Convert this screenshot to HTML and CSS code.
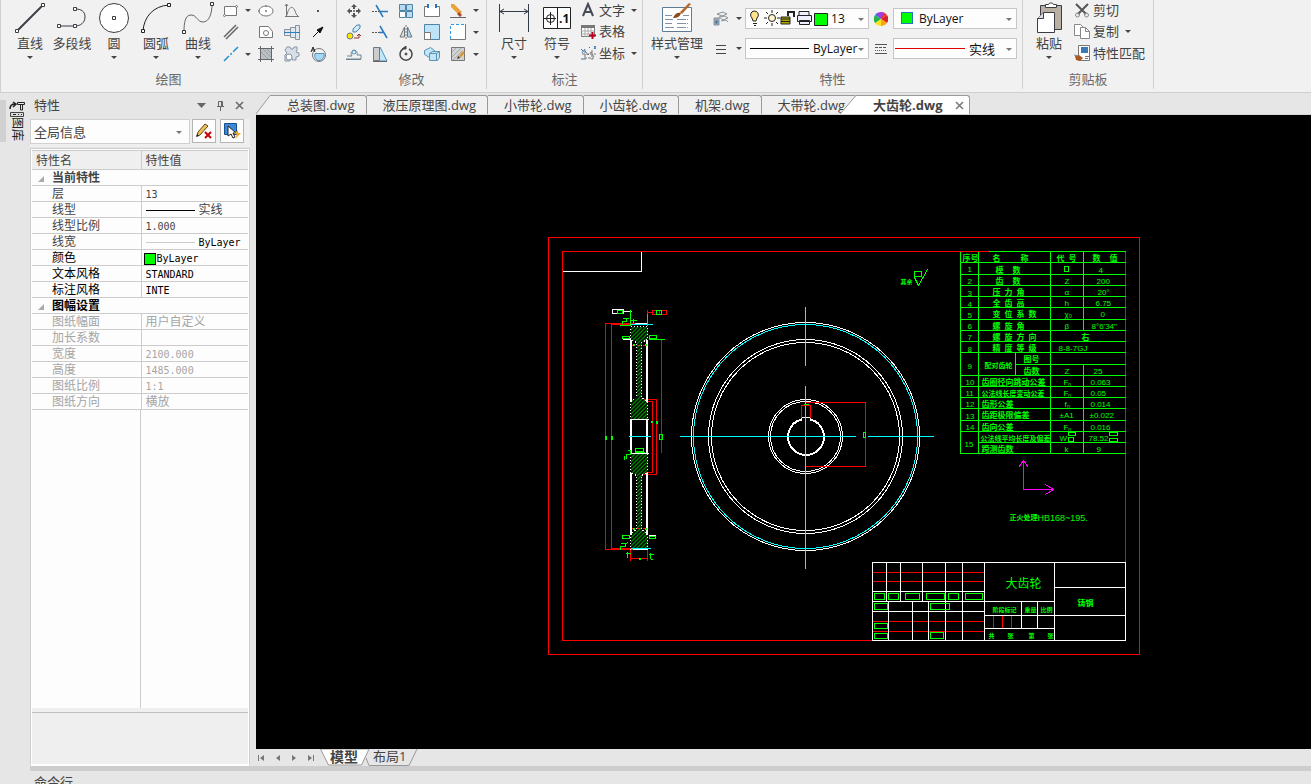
FILE: index.html
```html
<!DOCTYPE html>
<html lang="zh-CN">
	<head>
		<meta charset="UTF-8" />
		<meta name="viewport" content="width=device-width, initial-scale=1.0" />
		<title>大齿轮.dwg</title>
		<link rel="stylesheet" href="styles.css">
	</head>
	<body>
		<header class="ribbon">
			<section class="group draw">
				<div class="tools">
					<button type="button" class="big">
						<svg width="32" height="32" viewBox="0 0 32 32" fill="none" stroke="#3c3c44"><path d="M3 29L29 3" stroke-width="2"/><path d="M1.500 27.500h3v3h-3zM27.500 1.500h3v3h-3z" fill="#fff"/></svg>
						<span>直线</span><i class="caret"></i>
					</button>
					<button type="button" class="big">
						<svg width="32" height="32" viewBox="0 0 32 32" fill="none" stroke="#3c3c44"><path d="M3 24h16c5 0 10-3 10-9s-4-8-10-8" /><path d="M1.500 22.500h3v3h-3zM17.500 22.500h3v3h-3zM17.500 5.500h3v3h-3z" fill="#fff"/></svg>
						<span>多段线</span>
					</button>
					<button type="button" class="big">
						<svg width="32" height="32" viewBox="0 0 32 32" fill="#fff" stroke="#3c3c44"><circle cx="16" cy="16" r="14.500"/><path d="M14.500 14.500h3v3h-3z"/></svg>
						<span>圆</span><i class="caret"></i>
					</button>
					<button type="button" class="big">
						<svg width="32" height="32" viewBox="0 0 32 32" fill="none" stroke="#222"><path d="M3 29C4 15 13 4 29 3"/><path d="M1.500 27.500h3v3h-3zM27.500 1.500h3v3h-3z" fill="#fff"/></svg>
						<span>圆弧</span><i class="caret"></i>
					</button>
					<button type="button" class="big">
						<svg width="32" height="32" viewBox="0 0 32 32" fill="none" stroke="#666"><path d="M2 30C2 21 3 13 9 13s6 7 12 7 9-8 9-18"/><path d="M.5 28.500h3v3h-3zM28.500 .5h3v3h-3z" fill="#fff" stroke="#333"/></svg>
						<span>曲线</span><i class="caret"></i>
					</button>
					<div class="icons draw-icons">
						<button type="button"><svg width="16" height="16" viewBox="0 0 16 16" fill="#fff" stroke="#777"><path d="M1.500 3.500h12v9h-12z"/><circle cx="1.500" cy="12.500" r="1"/><circle cx="13.500" cy="3.500" r="1"/></svg><i class="caret"></i></button>
						<button type="button"><svg width="16" height="16" viewBox="0 0 16 16" fill="#fff" stroke="#777"><ellipse cx="8" cy="8" rx="7" ry="5"/><path d="M8 7v2M7 8h2M7 3h2M1 7v2"/></svg></button>
						<button type="button"><svg width="16" height="16" viewBox="0 0 16 16" fill="none" stroke="#777"><path d="M2.500 1v13M1 13.500h14M3 12C5 2 10 2 12 11M12 11l3 3M1 3l1.500-2L4 3"/></svg></button>
						<button type="button"><svg width="16" height="16" viewBox="0 0 16 16"><path d="M7 7h2v2H7z" fill="#555"/></svg></button>

						<button type="button"><svg width="16" height="16" viewBox="0 0 16 16" fill="none" stroke="#666"><path d="M1 13L13 1M3 15L15 3" stroke-width="1.500"/></svg></button>
						<button type="button"><svg width="16" height="16" viewBox="0 0 16 16" fill="#fff" stroke="#777"><path d="M1.500 2.500h9l4 5v6h-13z"/><circle cx="8" cy="9" r="2.500"/></svg></button>
						<button type="button"><svg width="16" height="16" viewBox="0 0 16 16" fill="#dfe8f0" stroke="#8a939b"><path d="M.5 5.500h6v6h-6zM6.500 3.500h5v10h-5zM11.500 1.500h4v14h-4z"/><path d="M0 8.500h16" stroke="#2a7fc0"/></svg></button>
						<button type="button"><svg width="16" height="16" viewBox="0 0 16 16" stroke="#111" fill="#111"><path d="M3 13l5-5M7 6l6-3-3 6z"/></svg></button>

						<button type="button"><svg width="16" height="16" viewBox="0 0 16 16" stroke="#1d93c9"><path d="M1 15L15 1" stroke-width="1.500" stroke-dasharray="7 2 2 2"/></svg><i class="caret"></i></button>
						<button type="button"><svg width="16" height="16" viewBox="0 0 16 16" stroke="#888"><path d="M2.500 2.500h11v11h-11z" fill="#b8c0c4"/><path d="M0 2.500h16M0 13.500h16M2.500 0v16M13.500 0v16" stroke="#666"/><path d="M3 6l7 7M5 3l8 8M9 3l4 4" stroke="#98a2a8"/></svg></button>
						<button type="button"><svg width="16" height="16" viewBox="0 0 16 16" fill="#d8dfe8" stroke="#8a95a5"><path d="M3 1h3l1 2h2l1-2h3v3l-1 2 3 1v3l-3 1v3h-4v-2H6v3H1v-6l2-2-2-3z"/><circle cx="5" cy="11" r="3" fill="#fff"/></svg></button>
						<button type="button"><svg width="16" height="16" viewBox="0 0 16 16" fill="none" stroke="#777"><circle cx="9" cy="9" r="6.500"/><path d="M5 7.500h9c1 4-2 7-5 7s-5-3-4-7z" fill="#a5d9f5" stroke="#5a8fb0"/><path d="M1 6l2-5 2 5M2 4h3" stroke="#222"/></svg></button>
					</div>
				</div>
				<h2>绘图</h2>
			</section>

			<section class="group modify">
				<div class="tools">
					<div class="icons modify-icons">
						<button type="button"><svg width="16" height="16" viewBox="0 0 16 16" fill="#555"><path d="M8 1l3 3H9v2H7V4H5zM8 15l3-3H9v-2H7v2H5zM1 8l3-3v2h2v2H4v2zM15 8l-3-3v2h-2v2h2v2z"/><circle cx="8" cy="8" r="1"/></svg></button>
						<button type="button"><svg width="16" height="16" viewBox="0 0 16 16" fill="none" stroke="#2a78c0"><path d="M4 2l7 12M8 8.500h8" stroke-width="1.500"/><path d="M0 8.500h7" stroke="#555" stroke-dasharray="2 1"/></svg></button>
						<button type="button"><svg width="16" height="16" viewBox="0 0 16 16" fill="#b7dcf2" stroke="#4f83a5"><path d="M1.500 1.500h6v6h-6zM8.500 1.500h6v6h-6zM8.500 8.500h6v6h-6z"/><path d="M1.500 8.500h6v6h-6z" fill="#fff"/></svg></button>
						<button type="button"><svg width="16" height="16" viewBox="0 0 16 16" fill="#fff" stroke="#777"><path d="M4 3.500H.5v10h15v-10H12"/><path d="M4 1v4M12 1v4" stroke="#2a78c0" stroke-width="2"/></svg></button>
						<button type="button"><svg width="16" height="16" viewBox="0 0 16 16"><path d="M1 1l3 0 8 8-3 3-8-8z" fill="#eba23b"/><path d="M9 9l3 3-2 2-3-3z" fill="#a9482a"/><path d="M0 14.500h16" stroke="#666"/></svg></button>
						<i class="caret"></i>

						<button type="button"><svg width="16" height="16" viewBox="0 0 16 16"><circle cx="4" cy="12" r="3" fill="#f6e600" stroke="#777"/><path d="M7 5l4-4h3v3l-4 4H7z" fill="#cdeafa" stroke="#4f83a5"/><path d="M8 14h5v-4M11 12l2-2 2 2" fill="none" stroke="#9b3030"/></svg></button>
						<button type="button"><svg width="16" height="16" viewBox="0 0 16 16" fill="none" stroke="#2a78c0"><path d="M8 2l7 12M7 8.500h5" stroke-width="1.500"/><path d="M0 8.500h7" stroke="#555" stroke-dasharray="2 1"/></svg></button>
						<button type="button"><svg width="16" height="16" viewBox="0 0 16 16" stroke="#777"><path d="M6.500 3v10H2z" fill="#ddd"/><path d="M9.500 3v10H14z" fill="#a5d9f5"/><path d="M8 1v14" stroke-dasharray="2 1"/></svg></button>
						<button type="button"><svg width="16" height="16" viewBox="0 0 16 16"><path d="M.5 .5h15v15H.5z" fill="#bfe4f8" stroke="#4f83a5"/><path d="M.5 8.500h6v7h-6z" fill="#fff" stroke="#777"/></svg></button>
						<button type="button"><svg width="16" height="16" viewBox="0 0 16 16"><path d="M.5 .5h15v15H.5z" fill="#fff"/><path d="M15.500 0v15.500H0" fill="none" stroke="#777"/><path d="M.5 15V.5H15" fill="none" stroke="#3399dd" stroke-dasharray="3 2"/></svg></button>
						<i class="caret"></i>

						<button type="button"><svg width="16" height="16" viewBox="0 0 16 16" fill="none" stroke="#6e8492"><path d="M1 10h5c-4-6 7-8 5-1h4v4H0" /><path d="M0 13.500h15"/><circle cx="8" cy="6" r="2" stroke="#4e94bf"/></svg></button>
						<button type="button"><svg width="16" height="16" viewBox="0 0 16 16"><path d="M1.500 1.500h6v13h-6z" fill="#ccc" stroke="#777"/><path d="M8 1l7 14H8" fill="#c4e7fa" stroke="#4b91bd" /><path d="M1 15.500h14" stroke="#666"/></svg></button>
						<button type="button"><svg width="16" height="16" viewBox="0 0 16 16" fill="none" stroke="#444"><path d="M5 3a6 6 0 1 0 6 0" stroke-width="1.500"/><path d="M4 3h4V0z" fill="#444"/><circle cx="8" cy="8" r="1" fill="#444"/></svg></button>
						<button type="button"><svg width="16" height="16" viewBox="0 0 16 16" fill="#c1e6f8" stroke="#5a92b2"><path d="M.5 4.500l6-3 4 3v6l-5 1-5-3z"/><path d="M5.500 7.500l3-2h7v6l-2 3h-8zM5.500 7.500h7v7M12.500 7.500l3-2"/></svg></button>
						<button type="button"><svg width="16" height="16" viewBox="0 0 16 16"><path d="M1.500 1.500h13v13h-13z" fill="#d0d3d5" stroke="#777"/><path d="M2 6l4-4M2 11l9-9M3 14l9-9" stroke="#aaa"/><path d="M8 11l5-6 2 2-5 5z" fill="#d69632"/><path d="M7 13l1-3 2 2z" fill="#333"/></svg></button>
						<i class="caret"></i>
					</div>
				</div>
				<h2>修改</h2>
			</section>

			<section class="group annotate">
				<div class="tools">
					<button type="button" class="big">
						<svg width="32" height="32" viewBox="0 0 32 32" fill="none" stroke="#333a48"><path d="M1.500 2v28M30.500 2v28M2 9.500h28M6 7L2 9.500 6 12M26 7l4 2.500-4 2.500"/></svg>
						<span>尺寸</span><i class="caret"></i>
					</button>
					<button type="button" class="big">
						<svg width="32" height="32" viewBox="0 0 32 32" fill="none" stroke="#222"><path d="M2.500 5.500h27v21h-27z" fill="#fff"/><path d="M16.500 5v22M3 16.500h12M9.500 10v13"/><circle cx="9.500" cy="16.500" r="4"/><text x="18" y="21" class="tolerance">.1</text></svg>
						<span>符号</span><i class="caret"></i>
					</button>
					<div class="list">
						<button type="button"><svg width="16" height="16" viewBox="0 0 16 16"><path d="M3 14L8 2l5 12M5 10h6" fill="none" stroke="#454a55" stroke-width="2"/></svg><span>文字</span><i class="caret"></i></button>
						<button type="button"><svg width="16" height="16" viewBox="0 0 16 16"><path d="M1.500 2.500h13v11h-13z" fill="#fff" stroke="#777"/><path d="M1 2h14v3H1z" fill="#777"/><path d="M1 8h13M1 11h13M5 5v9M8 5v9M11 5v9" stroke="#aaa"/><path d="M12.500 9v7M9 12.500h7" stroke="#c00020" stroke-width="2"/></svg><span>表格</span></button>
						<button type="button"><svg width="16" height="16" viewBox="0 0 16 16" fill="none" stroke="#777"><path d="M5 5v10M2 9h14M5 6l3 4 3-3 3 5M12 5v10M4 13h10" stroke-dasharray="3 1"/><path d="M1 4l2 2M5 4l-3 4M9 2l1 1M14 1l2 3M16 1l-2 3M1 14h3" stroke="#2a78c0"/></svg><span>坐标</span><i class="caret"></i></button>
					</div>
				</div>
				<h2>标注</h2>
			</section>

			<section class="group props">
				<div class="tools">
					<button type="button" class="big wide">
						<svg width="32" height="32" viewBox="0 0 32 32"><path d="M1.500 5.500h29v24h-29z" fill="#fff" stroke="#5d7b93"/><path d="M4 13.500h7M4 17.500h8M4 21.500h7M4 25.500h9M16 17.500h11M16 21.500h11M16 25.500h11M22 13.500h6" stroke="#8392a8" stroke-dasharray="9 1"/><path d="M12 16c2-5 5-6 8-5-1 4-4 5-8 5z" fill="#8b4a1c"/><path d="M19 10L28 1l2 1-9 10z" fill="#b8672b"/></svg>
						<span>样式管理</span><i class="caret"></i>
					</button>
					<div class="picks">
						<button type="button" class="mini"><svg width="16" height="16" viewBox="0 0 16 16" fill="#eee" stroke="#8a939b"><path d="M4 3l6-2 4 2-5 2zM6 6l6-1 3 2-5 2zM8 10l5-1 2 2"/><path d="M1 7h5v7H1z" fill="#9ab"/><circle cx="3.500" cy="11" r="1.500" fill="#2b6da8"/></svg><i class="caret"></i></button>
						<label class="combo layer">
							<svg class="over" width="84" height="18" viewBox="0 0 84 18" fill="none" stroke="#222"><path d="M8 2a4 4 0 0 1 3 7l-1 3H7l-1-3a4 4 0 0 1 2-7z" fill="#ffe48a"/><path d="M7 14.500h4M8 16.500h2"/><circle cx="26" cy="9" r="3.500" fill="#fff6cf"/><path d="M26 1v3M26 14v3M18 9h3M31 9h3M20 3l2 2M30 13l2 2M32 3l-2 2M22 13l-2 2"/><path d="M42 7V3h6v5" stroke-width="2"/><path d="M35 8h9v7h-9z" fill="#b0a800"/><path d="M35 10h9M35 12.500h9"/><path d="M53 6V2.500h10V6M51.500 6.500h14v6h-14zM53.500 11.500h10v4h-10z" fill="#eef"/><path d="M68.500 4.500h13v12h-13z" fill="#0f0"/></svg>
							<select aria-label="图层"><option>13</option></select><i class="caret"></i>
						</label>
						<svg class="mark" width="14" height="14" viewBox="0 0 14 14"><path d="M7 7V0a7 7 0 0 1 6 3z" fill="#e33"/><path d="M7 7l6-4a7 7 0 0 1 0 8z" fill="#d22"/><path d="M7 7l6 4a7 7 0 0 1-6 3z" fill="#f9a51a"/><path d="M7 7v7a7 7 0 0 1-6-3z" fill="#ffe11a"/><path d="M7 7l-6 4a7 7 0 0 1 0-8z" fill="#25b44b"/><path d="M7 7L1 3l2-2z" fill="#2a7fe0"/><path d="M7 7L2 2a7 7 0 0 1 8-1z" fill="#a03fe0"/></svg>
						<label class="combo color">
							<b class="swatch over"></b>
							<select aria-label="颜色"><option>ByLayer</option></select><i class="caret"></i>
						</label>
						<button type="button" class="mini"><svg width="16" height="16" viewBox="0 0 16 16" stroke="#444"><path d="M3 4.500h10M3 8.500h10M3 12.500h10"/></svg><i class="caret"></i></button>
						<label class="combo width">
							<b class="line over"></b>
							<select aria-label="线宽"><option>ByLayer</option></select><i class="caret"></i>
						</label>
						<svg class="mark" width="14" height="14" viewBox="0 0 14 14" stroke="#555"><path d="M1 2.500h12M1 11.500h12"/><path d="M1 5.500h12" stroke-dasharray="3 1"/><path d="M1 8.500h12" stroke-dasharray="1 1"/></svg>
						<label class="combo linetype">
							<b class="line over"></b>
							<select aria-label="线型"><option>实线</option></select><i class="caret"></i>
						</label>
					</div>
				</div>
				<h2>特性</h2>
			</section>

			<section class="group clipboard">
				<div class="tools">
					<button type="button" class="big">
						<svg width="32" height="32" viewBox="0 0 32 32" stroke="#3c3c44"><path d="M7.500 3.500h21v24h-21z" fill="#b9b0a3"/><path d="M12.500 5.500v-3h3c0-2 5-2 5 0h3v3z" fill="#fff"/><path d="M4.500 16.500l6-6h11v20h-17z" fill="#fff"/><path d="M4.500 16.500h6v-6" fill="#ddd"/></svg>
						<span>粘贴</span><i class="caret"></i>
					</button>
					<div class="list">
						<button type="button"><svg width="16" height="16" viewBox="0 0 16 16" fill="none" stroke="#555"><path d="M2 2l10 10M14 2L4 12" stroke-width="2"/><circle cx="3.500" cy="13" r="2" stroke="#888"/><circle cx="12.500" cy="13" r="2" stroke="#888"/></svg><span>剪切</span></button>
						<button type="button"><svg width="16" height="16" viewBox="0 0 16 16" fill="#fff" stroke="#888"><path d="M.5 1.500h6l3 3v8h-9z"/><path d="M6.500 4.500h5l4 4v7h-9z"/><path d="M11.500 4.500v4h4" fill="none"/></svg><span>复制</span><i class="caret"></i></button>
						<button type="button"><svg width="16" height="16" viewBox="0 0 16 16"><path d="M4.500 .5h11v15h-11z" fill="#fff" stroke="#777"/><path d="M7 2h7v6H7z" fill="#3d7ab5"/><path d="M11 11.500h4M11 13.500h3" stroke="#777"/><path d="M1 11l4-1 4 3-3 3-4-1z" fill="#a9591c"/><path d="M0 10l5 1" stroke="#888"/></svg><span>特性匹配</span></button>
					</div>
				</div>
				<h2>剪贴板</h2>
			</section>
		</header>

		<main class="workspace">
			<nav class="rail">
				<button type="button">
					<svg width="16" height="16" viewBox="0 0 16 16" fill="none" stroke="#222"><path d="M1 8c0-4 2-5 5-5M4 1l3 2-3 3" stroke-width="1.500"/><path d="M8.500 1.500h7v2h-7zM11.500 4v5h2V4" /><path d="M1.500 11.500h13v4h-13z" fill="#ddd" stroke="#444"/><path d="M4 13.500h3M9 13.500h1M12 13.500h1"/></svg>
					<span>图库</span>
				</button>
			</nav>

			<aside class="panel">
				<div class="panel-head">
					<h3>特性</h3>
					<button type="button" aria-label="菜单"><svg width="11" height="11" viewBox="0 0 11 11"><path d="M1 3h9L5.500 8z" fill="#666"/></svg></button>
					<button type="button" aria-label="固定"><svg width="11" height="11" viewBox="0 0 11 11" fill="none" stroke="#666"><path d="M3.500 6V1.500h4V6M2 6.500h7M5.500 7v4M6.500 2v4"/></svg></button>
					<button type="button" aria-label="关闭"><svg width="11" height="11" viewBox="0 0 11 11" stroke="#666" stroke-width="1.500"><path d="M2 2l7 7M9 2L2 9"/></svg></button>
				</div>
				<div class="panel-bar">
					<label class="combo scope">
						<select aria-label="范围"><option>全局信息</option></select><i class="caret"></i>
					</label>
					<button type="button" aria-label="清除选择"><svg width="18" height="18" viewBox="0 0 18 18"><path d="M3 10l7-8 3 2-8 9-3 1z" fill="#f0c050" stroke="#5b4420"/><path d="M1 15l1-3 2 2z" fill="#222"/><path d="M10 10l6 6M16 10l-6 6" stroke="#c00" stroke-width="2"/></svg></button>
					<button type="button" aria-label="快速选择"><svg width="18" height="18" viewBox="0 0 18 18"><path d="M1.500 1.500h12v11h-12z" fill="#3b8ad8" stroke="#17508c"/><path d="M5 4v10l3-2 2 4 2-1-2-4h3z" fill="#fff" stroke="#222"/><path d="M15 8l-4 4h3l-2 5 6-6h-3z" fill="#f7a51e"/></svg></button>
				</div>
				<div class="sheet">
					<table>
						<tr><th>特性名</th><th>特性值</th></tr>
						<tr class="cat"><td colspan="2">当前特性</td></tr>
						<tr><td>层</td><td><code>13</code></td></tr>
						<tr><td>线型</td><td><b class="sample"></b>实线</td></tr>
						<tr><td>线型比例</td><td><code>1.000</code></td></tr>
						<tr><td>线宽</td><td class="dark"><b class="sample thin"></b><code>ByLayer</code></td></tr>
						<tr class="dark"><td>颜色</td><td><b class="chip"></b><code>ByLayer</code></td></tr>
						<tr class="dark"><td>文本风格</td><td><code>STANDARD</code></td></tr>
						<tr class="dark"><td>标注风格</td><td><code>INTE</code></td></tr>
						<tr class="cat dark"><td colspan="2">图幅设置</td></tr>
						<tr class="off"><td>图纸幅面</td><td>用户自定义</td></tr>
						<tr class="off"><td>加长系数</td><td></td></tr>
						<tr class="off"><td>宽度</td><td><code>2100.000</code></td></tr>
						<tr class="off"><td>高度</td><td><code>1485.000</code></td></tr>
						<tr class="off"><td>图纸比例</td><td><code>1:1</code></td></tr>
						<tr class="off"><td>图纸方向</td><td>横放</td></tr>
					</table>
					<div class="blank"></div>
					<div class="hint"></div>
				</div>
			</aside>

			<section class="editor">
				<nav class="files">
					<svg class="lead" width="15" height="19" viewBox="0 0 15 19"><path d="M0 19L14 .5H15V19z" fill="#f0f0f0"/><path d="M0 19L14 .5H15" fill="none" stroke="#999"/></svg>
					<a href="#" class="first">总装图.dwg</a>
					<a href="#">液压原理图.dwg</a>
					<a href="#">小带轮.dwg</a>
					<a href="#">小齿轮.dwg</a>
					<a href="#">机架.dwg</a>
					<a href="#">大带轮.dwg</a>
					<a href="#" class="active"><svg class="slant" width="17" height="19" viewBox="0 0 17 19"><path d="M0 19L16 .5H17V19z" fill="#fff"/><path d="M0 19L16 .5H17" fill="none" stroke="#999"/></svg>大齿轮.dwg<svg width="9" height="9" viewBox="0 0 9 9" stroke="#777" stroke-width="1.500"><path d="M1 1l7 7M8 1L1 8"/></svg></a>
				</nav>

				<div class="canvas">
					<!-- half pixel origin keeps the 1px strokes sharp -->
					<svg class="drawing" viewBox="255.500 114.500 1055 634" fill="none" shape-rendering="crispEdges">
						<defs>
							<pattern id="hatch" width="4" height="4" patternUnits="userSpaceOnUse">
								<path d="M-1 5L5 -1M-1 1L1 -1M3 5L5 3" stroke="#0f0" stroke-width="1.200"/>
							</pattern>
						</defs>

						<!-- sheet frame -->
						<path d="M548 237H1139V654H548zM562 251H1125V640H562z" stroke="#f00"/>
						<path d="M562 271H641V251" stroke="#fff"/>

						<!-- side view -->
						<g stroke="#f00">
							<path d="M634 323H605V549H634M634 324H611V548H634"/>
							<path d="M643 399H656V474H643M645 401H652V472H645M661 339V452"/>
							<path d="M630 345H647M630 528H647" stroke-dasharray="3 3"/>
							<path d="M630 549V560M647 549V560M630 558H647M647 309V313M647 312H653M652 310H666V314H652zM659 310V314M617 309V313"/>
						</g>
						<path d="M630 326H647V339L641 342V397L647 401V419H630V401L636 397V342L630 339z" fill="url(#hatch)"/>
						<path d="M630 453H647V472L641 475V529L647 533V549H630V533L636 529V475L630 472z" fill="url(#hatch)"/>
						<g stroke="#fff">
							<path d="M630.500 339V401M630.500 419V453M630.500 472V534M646.500 339V401M646.500 419V453M646.500 472V534" stroke-width="2"/>
							<path d="M630 419H648M630 453H648M634 323H647M632 549H647"/>
							<path d="M612 309H623V313H612zM623 311H631M622 339H630M648 338H656M648 535H655"/>
							<path d="M630 326H647V339L641 342V397L647 401V419M630 419V401L636 397V342L630 339V326M630 453V472L636 475V529L630 533V549M647 453V472L641 475V529L647 533V549" stroke-dasharray="1 2"/>
						</g>
						<path d="M628 436H650M629 324H652M630 548H650" stroke="#0ff"/>
						<g stroke="#0f0">
							<path d="M619 325H630V309M647 313V325M648 339H664"/>
							<path d="M617 310H622V313H617zM656 310H661V314H656zM622 336H629V338H622zM649 335H656V338H649zM622 535H629V538H622zM649 536H655V538H649zM659 434H662V439H659zM635 448H643V451H635zM634 452H644M625 454H630V450H627M624 455V459M626 454V458"/>
							<path d="M622 318H626V321H622V323M626 319L629 317M630 320H636M633 318V322M620 543H625V546H620V549M625 544L627 542M625 553H630M627 551V557M648 554H653M650 552V558L653 560"/>
						</g>
						<path d="M604 435h2v4h-2zM610 435h2v4h-2zM655 420h2v3h-2zM650 420h2v2h-2zM632 343h2v2h-2zM644 343h2v2h-2zM632 527h2v2h-2zM644 527h2v2h-2zM638 557h2v2h-2z" fill="#0f0"/>

						<!-- front view -->
						<g stroke="#fff">
							<circle cx="805" cy="436" r="114"/>
							<circle cx="805" cy="436" r="97"/>
							<circle cx="805" cy="436" r="94"/>
							<circle cx="805" cy="436" r="37"/>
							<circle cx="805" cy="436" r="35"/>
							<path d="M801 420V417H810V420" />
							<path d="M801 419A18 18 0 1 0 810 419" stroke-width="2"/>
						</g>
						<circle cx="805" cy="436" r="112" stroke="#0ff"/>
						<path d="M679 436H855M867 436H933M805 306V365M805 385V568" stroke="#0ff"/>
						<path d="M805 402H865V466H805M801 417V404M810 417V404M801 405H810" stroke="#f00"/>
						<path d="M803 404H808M863 432H865V437H863z" stroke="#0f0" stroke-width="1"/>

						<!-- surface finish -->
						<path d="M914 271H921V276H914zM914 277L918 285L927 269" stroke="#0f0"/>
						<text x="900" y="283" class="t6">其余</text>

						<!-- gear data -->
						<g stroke="#0f0">
							<path d="M988 251H1125M960 262H1125M960 274H1125M960 285H1125M960 296H1125M960 307H1125M960 319H1125M960 330H1125M960 341H1125M960 352H1125M1015 364H1125M960 375H1125M960 386H1125M960 397H1125M960 408H1125M960 420H1125M960 431H1125M978 442H1125M960 453H1125"/>
							<path d="M960 251V453M978 251V453M1050 251V453M1083 251V330M1083 364V453M1015 352V375"/>
							<path d="M1064 266H1068V271H1064zM1068 432H1075V435H1068zM1068 437H1073V441H1068zM1109 432H1117V435H1109zM1109 438H1117V441H1109z"/>
						</g>
						<g class="t8">
							<text x="962 970" y="260">序号</text><text x="992 1020" y="260">名称</text><text x="1056 1068" y="260">代号</text><text x="1092 1109" y="260">数值</text>
							<text x="995 1012" y="272">模数</text>
							<text x="995 1012" y="283">齿数</text>
							<text x="992 1004 1016" y="294">压力角</text>
							<text x="992 1004 1016" y="305">全齿高</text>
							<text x="992 1004 1016 1028" y="316">变位系数</text>
							<text x="992 1004 1016" y="328">螺旋角</text>
							<text x="992 1004 1016 1028" y="339">螺旋方向</text><text x="1081" y="339">右</text>
							<text x="992 1004 1016 1028" y="350">精度等级</text>
							<text x="1023" y="361">图号</text><text x="1023" y="373">齿数</text>
							<text x="981" y="384">齿圈径向跳动公差</text>
							<text x="981" y="406">齿形公差</text>
							<text x="981" y="417">齿距极限偏差</text>
							<text x="981" y="429">齿向公差</text>
							<text x="981" y="451">跨测齿数</text>
						</g>
						<g class="t7">
							<text x="984" y="367">配对齿轮</text>
							<text x="981" y="395">公法线长度变动公差</text>
							<text x="980" y="440">公法线平均长度及偏差</text>
							<text x="1009" y="519">正火处理</text>
						</g>
						<g class="num">
							<text x="967" y="271">1</text><text x="967" y="283">2</text><text x="967" y="295">3</text><text x="967" y="306">4</text><text x="967" y="317">5</text><text x="967" y="328">6</text><text x="967" y="339">7</text><text x="967" y="351">8</text><text x="967" y="368">9</text><text x="965" y="384">10</text><text x="965" y="395">11</text><text x="965" y="406">12</text><text x="965" y="418">13</text><text x="965" y="429">14</text><text x="964" y="446">15</text>
							<text x="1098" y="272">4</text>
							<text x="1064" y="283">Z</text><text x="1096" y="283">200</text>
							<text x="1064" y="294">α</text><text x="1097" y="294">20°</text>
							<text x="1064" y="305">h</text><text x="1095" y="305">6.75</text>
							<text x="1064" y="316">χ₀</text><text x="1100" y="316">0</text>
							<text x="1064" y="328">β</text><text x="1091" y="328">8°6'34"</text>
							<text x="1058" y="350">8-8-7GJ</text>
							<text x="1064" y="373">Z</text><text x="1093" y="373">25</text>
							<text x="1063" y="384">Fₙ</text><text x="1090" y="384">0.063</text>
							<text x="1063" y="395">Fₙ</text><text x="1090" y="395">0.05</text>
							<text x="1064" y="406">fₙ</text><text x="1090" y="406">0.014</text>
							<text x="1059" y="417">±A1</text><text x="1089" y="417">±0.022</text>
							<text x="1063" y="429">Fₙ</text><text x="1090" y="429">0.016</text>
							<text x="1059" y="440">W</text><text x="1088" y="440">78.52</text>
							<text x="1064" y="451">k</text><text x="1096" y="451">9</text>
						</g>
						<text x="1037" y="520" class="note">HB168~195.</text>

						<!-- ucs -->
						<path d="M1023 460V489H1053M1018 467L1023 460L1028 467M1045 484L1053 489L1045 494" stroke="#f0f"/>

						<!-- title block -->
						<path d="M872 572H984M872 581H984M872 621H984M872 631H984M993 615V628M1002 615V628M1011 615V628" stroke="#f00"/>
						<path d="M872 562H1125V640H872zM872 591H984M872 601H1054M872 611H984M886 562V601M900 562V601M922 562V601M945 562V640M962 562V640M984 562V640M888 601V640M912 601V640M928 601V640M1054 562V640M1054 587H1125M984 615H1125M984 628H1054M1021 601V628M1037 601V628" stroke="#fff"/>
						<path d="M874 593h10v6h-10zM888 593h10v6h-10zM905 593h14v6h-14zM926 593h18v6h-18zM948 593h10v6h-10zM965 593h17v6h-17zM874 603h13v6h-13zM930 603h19v6h-19zM874 623h13v5h-13zM874 633h13v5h-13zM930 632h13v6h-13z" stroke="#0f0"/>
						<text x="1005" y="587" class="part">大齿轮</text>
						<text x="1077" y="605" class="t8">铸钢</text>
						<g class="t6">
							<text x="992" y="611">阶段标记</text><text x="1024" y="611">重量</text><text x="1040" y="611">比例</text>
							<text x="988 1007 1028 1047" y="637">共张第张</text>
						</g>
					</svg>
				</div>

				<nav class="sheets">
					<button type="button" aria-label="第一个"><svg width="8" height="8" viewBox="0 0 8 8" fill="#777"><path d="M0 1h1v6H0zM6 1v6L2 4z"/></svg></button>
					<button type="button" aria-label="上一个"><svg width="8" height="8" viewBox="0 0 8 8" fill="#777"><path d="M6 1v6L2 4z"/></svg></button>
					<button type="button" aria-label="下一个"><svg width="8" height="8" viewBox="0 0 8 8" fill="#777"><path d="M2 1v6l4-3z"/></svg></button>
					<button type="button" aria-label="最后一个"><svg width="8" height="8" viewBox="0 0 8 8" fill="#777"><path d="M2 1v6l4-3zM7 1h1v6H7z"/></svg></button>
					<a href="#" class="active"><svg width="50" height="17" viewBox="0 0 50 17"><path d="M.5 0l8 16h33L49 0z" fill="#fff" stroke="#999"/></svg><span>模型</span></a>
					<a href="#" class="layout"><svg width="54" height="17" viewBox="0 0 54 17"><path d="M1 9l3 7.500h40L52 0" fill="none" stroke="#999"/></svg><span>布局1</span></a>
				</nav>
			</section>
		</main>

		<footer class="command">命令行</footer>
	</body>
</html>
```
FILE: styles.css
```css
* {
	box-sizing: border-box;
}
body {
	margin: 0;
	height: 100vh;
	display: flex;
	flex-direction: column;
	overflow: hidden;
	background: #e6e6e6;
	color: #444;
	font: 13px/18px "Open Sans", "Noto Sans CJK SC", sans-serif;
}
button,
select {
	font: inherit;
	color: inherit;
	margin: 0;
	padding: 0;
	border: 0;
	background: none;
}
button {
	display: flex;
	align-items: center;
	justify-content: center;
}
button:hover {
	background: #dcebf7;
}
svg {
	display: block;
	flex: none;
}
a {
	color: inherit;
	text-decoration: none;
}
.caret {
	width: 0;
	border: 3px solid transparent;
	border-top-color: #444;
	border-bottom: 0;
}

/* ribbon */
.ribbon {
	flex: none;
	display: flex;
	height: 93px;
	padding-bottom: 3px;
	background: #f1f1f1;
	border-left: 1px solid #d0d0d0;
	border-bottom: 1px solid #cfcfcf;
}
.group {
	display: flex;
	flex-direction: column;
	border-right: 1px solid #d0d0d0;
}
.group h2 {
	margin: 0;
	padding-top: 4px;
	font-size: 13px;
	font-weight: normal;
	color: #6a6a6a;
	text-align: center;
}
.tools {
	display: flex;
	height: 66px;
}
.draw .tools {
	padding: 0 5px 0 8px;
}
.modify .tools {
	padding: 0 5px 0 4px;
}
.annotate .tools {
	gap: 1px;
	padding: 0 5px 0 6px;
}
.props .tools {
	padding: 0 5px;
}
.clipboard .tools {
	padding: 0 8px 0 5px;
}
.big {
	flex-direction: column;
	justify-content: flex-start;
	width: 42px;
	padding-top: 2px;
	white-space: nowrap;
}
.big .caret {
	margin-top: 4px;
}
.wide {
	width: 58px;
}
.tolerance {
	font: bold 12px "Open Sans", sans-serif;
	fill: #111;
	stroke: none;
}
.icons {
	display: grid;
	grid-template-rows: 21px 22px 22px;
	align-items: center;
}
.draw-icons {
	grid-template-columns: 34px 26px 26px 26px;
}
.draw-icons button:nth-child(4n + 1) {
	justify-content: flex-start;
	gap: 6px;
	padding-left: 4px;
}
.modify-icons {
	grid-template-columns: repeat(5, 26px) 10px;
	justify-items: center;
}
.list {
	display: grid;
	grid-template-rows: 20px 22px 22px;
	padding-left: 4px;
}
.annotate .list {
	padding-left: 1px;
}
.list button {
	justify-content: flex-start;
	gap: 3px;
}
.list .caret {
	margin-left: 3px;
}

/* property pickers */
.picks {
	display: grid;
	grid-template-columns: 34px 124px 24px 124px;
	grid-template-rows: 21px 21px;
	row-gap: 9px;
	align-items: center;
	padding: 8px 0 0 5px;
}
.mini {
	gap: 7px;
	justify-content: flex-start;
	height: 21px;
	padding-left: 2px;
}
.mark {
	margin: auto;
}
.combo {
	position: relative;
	display: block;
	height: 21px;
	color: #111;
}
.combo select {
	appearance: none;
	width: 100%;
	height: 100%;
	border: 1px solid #c6c6c6;
	background: #fdfdfd;
	font-size: 12px;
}
.combo .caret {
	position: absolute;
	right: 5px;
	top: 50%;
	margin-top: -1px;
	border-top-color: #777;
}
.over {
	position: absolute;
	left: 1px;
	top: 1px;
	pointer-events: none;
}
.layer select {
	padding-left: 85px;
}
.color select {
	padding-left: 25px;
}
.width select {
	padding-left: 67px;
}
.linetype select {
	padding-left: 75px;
	font-size: 13px;
}
.swatch {
	left: 8px;
	top: 4px;
	width: 12px;
	height: 12px;
	background: #0f0;
	border: 1px solid #2573c2;
}
.line {
	top: 10px;
	left: 5px;
	width: 59px;
	border-top: 1px solid #000;
}
.linetype .line {
	left: 2px;
	width: 70px;
	border-color: #e00000;
}

/* workspace */
.workspace {
	flex: 1;
	min-height: 0;
	display: flex;
}
.rail {
	width: 30px;
	padding-top: 7px;
}
.rail button {
	flex-direction: column;
	width: 25px;
	height: 42px;
	padding-left: 3px;
	border-left: 6px solid #d0d0d0;
}
.rail span {
	writing-mode: vertical-rl;
	text-orientation: sideways;
	font-size: 12px;
	line-height: 14px;
	color: #222;
}
.panel {
	width: 220px;
	display: flex;
	flex-direction: column;
}
.panel-head {
	display: flex;
	align-items: center;
	height: 26px;
	padding: 0 5px 2px 4px;
	gap: 8px;
}
.panel-head h3 {
	flex: 1;
	margin: 0;
	font-size: 13px;
	font-weight: normal;
}
.panel-bar {
	display: flex;
	gap: 4px;
	padding: 0 6px 3px 0;
	background: #efefef;
}
.panel-bar button {
	width: 24px;
	height: 24px;
	border: 1px solid #b5b5b5;
	background: #fdfdfd;
}
.scope {
	flex: 1;
	height: 25px;
	margin-right: -2px;
	color: #444;
}
.scope select {
	padding-left: 3px;
	font-size: 13px;
	border: 1px solid #d0d0d0;
}
.scope .caret {
	right: 8px;
}
.sheet {
	flex: 1;
	display: flex;
	flex-direction: column;
	margin-top: 1px;
	padding: 1px;
	border: 1px solid #d0d0d0;
	background: #fdfdfd;
	border-bottom: 1px solid #fff;
}
table {
	width: 100%;
	table-layout: fixed;
	border-collapse: collapse;
	font-size: 12px;
	line-height: 15px;
}
th,
td {
	height: 16px;
	padding: 0 0 0 4px;
	border-bottom: 1px solid #ccc;
	text-align: left;
	white-space: nowrap;
}
th {
	height: 19px;
	font-weight: normal;
	background: #efefef;
	border-top: 1px solid #ccc;
}
th:first-child {
	width: 109px;
	border-right: 1px solid #ccc;
}
td:first-child {
	padding-left: 20px;
	border-right: 1px solid #ccc;
}
.cat td:first-child {
	position: relative;
	font-weight: bold;
	border-right: 0;
}
.cat td::before {
	content: "";
	position: absolute;
	left: 6px;
	top: 6px;
	border: 3px solid #aaa;
	border-top-color: transparent;
	border-left-color: transparent;
}
.dark {
	color: #000;
}
.off {
	color: #a5a5a5;
}
code {
	display: inline-block;
	vertical-align: middle;
	font: 10px/12px "DejaVu Sans Mono", monospace;
}
.sample,
.chip {
	display: inline-block;
	vertical-align: middle;
}
.sample {
	width: 49px;
	margin-right: 4px;
	border-top: 1px solid #000;
}
.thin {
	border-color: #ccc;
}
.chip {
	width: 12px;
	height: 12px;
	margin: 0 1px 0 -2px;
	background: #0f0;
	border: 1px solid #000;
}
.blank {
	flex: 1;
	width: 109px;
	border-right: 1px solid #ccc;
}
.hint {
	height: 56px;
	background: #efefef;
	border-top: 4px solid #efefef;
	box-shadow: inset 0 1px #c0c0c0;
}

/* editor */
.editor {
	flex: 1;
	min-width: 0;
	margin-left: 6px;
	display: flex;
	flex-direction: column;
}
.files {
	display: flex;
	align-items: flex-end;
	height: 22px;
	border-bottom: 1px solid #d5d5d5;
	font-size: 13px;
}
.files a {
	position: relative;
	height: 19px;
	padding: 0 11px 0 16px;
	line-height: 18px;
	white-space: nowrap;
	background: #f0f0f0;
	border-top: 1px solid #999;
	border-right: 1px solid #999;
	border-radius: 0 3px 0 0;
}
.files .active {
	display: flex;
	align-items: center;
	gap: 12px;
	padding-right: 5px;
	font-weight: bold;
	background: #fff;
}
.slant {
	position: absolute;
	left: -17px;
	top: -1px;
}
.canvas {
	flex: 1;
	min-height: 0;
	background: #000;
}
.drawing {
	width: 100%;
	height: 100%;
}
.drawing text {
	fill: #0f0;
	font-family: "Liberation Sans", "Noto Sans CJK SC", sans-serif;
}
.t6 {
	font-size: 6px;
	font-weight: bold;
}
.t7 {
	font-size: 7px;
	font-weight: bold;
}
.t8 {
	font-size: 8px;
	font-weight: bold;
}
.num {
	font-size: 8px;
}
.note {
	font-size: 9px;
}
.part {
	font-size: 12px;
}
.sheets {
	display: flex;
	align-items: center;
	height: 17px;
}
.sheets button {
	width: 16px;
	height: 16px;
	padding-right: 4px;
}
.sheets a {
	position: relative;
	width: 45px;
	height: 17px;
	padding-left: 10px;
	line-height: 15px;
}
.sheets a svg {
	position: absolute;
	left: 0;
	top: 0;
}
.sheets span {
	position: relative;
}
.sheets .active {
	z-index: 1;
	font-size: 14px;
	font-weight: bold;
}
.sheets .layout {
	padding-left: 8px;
}

.command {
	flex: none;
	height: 18px;
	margin-left: 30px;
	padding: 2px 4px 0;
	border-top: 5px solid #cdcdcd;
	overflow: hidden;
}
```
